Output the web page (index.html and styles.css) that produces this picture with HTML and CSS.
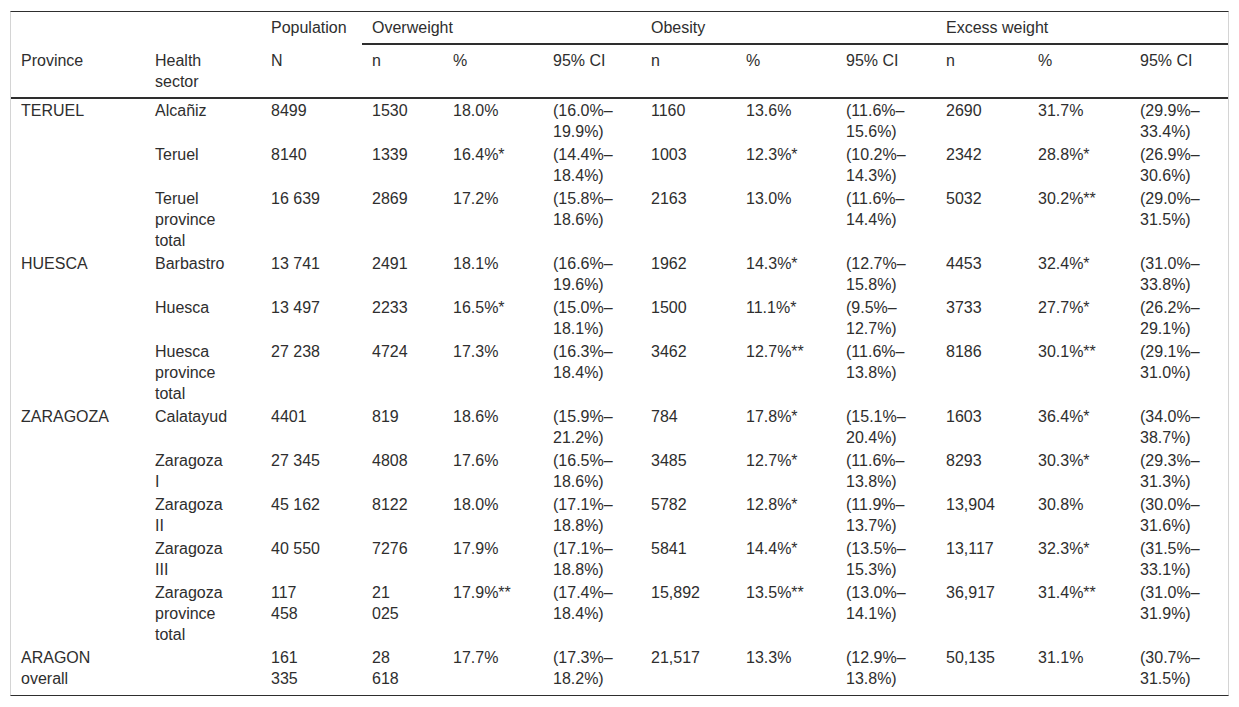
FILE: index.html
```html
<!DOCTYPE html>
<html lang="en">
<head>
<meta charset="utf-8">
<title>Overweight and obesity by health sector</title>
<link rel="stylesheet" href="styles.css">
</head>
<body>
<div class="table-wrap">
<table class="data">
<colgroup>
<col class="c-prov"><col class="c-sector"><col class="c-pop">
<col class="c-ow-n"><col class="c-ow-p"><col class="c-ow-ci">
<col class="c-ob-n"><col class="c-ob-p"><col class="c-ob-ci">
<col class="c-ex-n"><col class="c-ex-p"><col class="c-ex-ci">
</colgroup>
<thead>
<tr class="head-top">
<th></th><th></th><th>Population</th>
<th colspan="3" class="group">Overweight</th>
<th colspan="3" class="group">Obesity</th>
<th colspan="3" class="group">Excess weight</th>
</tr>
<tr class="head-sub">
<th>Province</th><th>Health<br>sector</th><th>N</th>
<th>n</th><th>%</th><th>95% CI</th>
<th>n</th><th>%</th><th>95% CI</th>
<th>n</th><th>%</th><th>95% CI</th>
</tr>
</thead>
<tbody>
<tr><td>TERUEL</td><td>Alcañiz</td><td>8499</td><td>1530</td><td>18.0%</td><td>(16.0%–<br>19.9%)</td><td>1160</td><td>13.6%</td><td>(11.6%–<br>15.6%)</td><td>2690</td><td>31.7%</td><td>(29.9%–<br>33.4%)</td></tr>
<tr><td></td><td>Teruel</td><td>8140</td><td>1339</td><td>16.4%*</td><td>(14.4%–<br>18.4%)</td><td>1003</td><td>12.3%*</td><td>(10.2%–<br>14.3%)</td><td>2342</td><td>28.8%*</td><td>(26.9%–<br>30.6%)</td></tr>
<tr><td></td><td>Teruel<br>province<br>total</td><td>16 639</td><td>2869</td><td>17.2%</td><td>(15.8%–<br>18.6%)</td><td>2163</td><td>13.0%</td><td>(11.6%–<br>14.4%)</td><td>5032</td><td>30.2%**</td><td>(29.0%–<br>31.5%)</td></tr>
<tr><td>HUESCA</td><td>Barbastro</td><td>13 741</td><td>2491</td><td>18.1%</td><td>(16.6%–<br>19.6%)</td><td>1962</td><td>14.3%*</td><td>(12.7%–<br>15.8%)</td><td>4453</td><td>32.4%*</td><td>(31.0%–<br>33.8%)</td></tr>
<tr><td></td><td>Huesca</td><td>13 497</td><td>2233</td><td>16.5%*</td><td>(15.0%–<br>18.1%)</td><td>1500</td><td>11.1%*</td><td>(9.5%–<br>12.7%)</td><td>3733</td><td>27.7%*</td><td>(26.2%–<br>29.1%)</td></tr>
<tr><td></td><td>Huesca<br>province<br>total</td><td>27 238</td><td>4724</td><td>17.3%</td><td>(16.3%–<br>18.4%)</td><td>3462</td><td>12.7%**</td><td>(11.6%–<br>13.8%)</td><td>8186</td><td>30.1%**</td><td>(29.1%–<br>31.0%)</td></tr>
<tr><td>ZARAGOZA</td><td>Calatayud</td><td>4401</td><td>819</td><td>18.6%</td><td>(15.9%–<br>21.2%)</td><td>784</td><td>17.8%*</td><td>(15.1%–<br>20.4%)</td><td>1603</td><td>36.4%*</td><td>(34.0%–<br>38.7%)</td></tr>
<tr><td></td><td>Zaragoza<br>I</td><td>27 345</td><td>4808</td><td>17.6%</td><td>(16.5%–<br>18.6%)</td><td>3485</td><td>12.7%*</td><td>(11.6%–<br>13.8%)</td><td>8293</td><td>30.3%*</td><td>(29.3%–<br>31.3%)</td></tr>
<tr><td></td><td>Zaragoza<br>II</td><td>45 162</td><td>8122</td><td>18.0%</td><td>(17.1%–<br>18.8%)</td><td>5782</td><td>12.8%*</td><td>(11.9%–<br>13.7%)</td><td>13,904</td><td>30.8%</td><td>(30.0%–<br>31.6%)</td></tr>
<tr><td></td><td>Zaragoza<br>III</td><td>40 550</td><td>7276</td><td>17.9%</td><td>(17.1%–<br>18.8%)</td><td>5841</td><td>14.4%*</td><td>(13.5%–<br>15.3%)</td><td>13,117</td><td>32.3%*</td><td>(31.5%–<br>33.1%)</td></tr>
<tr><td></td><td>Zaragoza<br>province<br>total</td><td>117<br>458</td><td>21<br>025</td><td>17.9%**</td><td>(17.4%–<br>18.4%)</td><td>15,892</td><td>13.5%**</td><td>(13.0%–<br>14.1%)</td><td>36,917</td><td>31.4%**</td><td>(31.0%–<br>31.9%)</td></tr>
<tr class="last"><td>ARAGON<br>overall</td><td></td><td>161<br>335</td><td>28<br>618</td><td>17.7%</td><td>(17.3%–<br>18.2%)</td><td>21,517</td><td>13.3%</td><td>(12.9%–<br>13.8%)</td><td>50,135</td><td>31.1%</td><td>(30.7%–<br>31.5%)</td></tr>
</tbody>
</table>
</div>
</body>
</html>
```

FILE: styles.css
```css
html, body {
  margin: 0;
  padding: 0;
  background: #ffffff;
}

body {
  font-family: "Liberation Sans", Arial, sans-serif;
  font-size: 16px;
  line-height: 21px;
  color: #2e2e2e;
}

.table-wrap {
  margin: 11px 0 0 10px;
  width: 1217px;
  border-top: 1px solid #2e2e2e;
  border-bottom: 1px solid #2e2e2e;
  border-left: 1px solid #d4d4d4;
  border-right: 1px solid #d4d4d4;
}

.data {
  width: 1217px;
  table-layout: fixed;
  border-collapse: separate;
  border-spacing: 0;
}

.c-prov { width: 134px; }
.c-sector { width: 116px; }
.c-pop { width: 101px; }
.c-ow-n { width: 81px; }
.c-ow-p { width: 100px; }
.c-ow-ci { width: 98px; }
.c-ob-n { width: 95px; }
.c-ob-p { width: 100px; }
.c-ob-ci { width: 100px; }
.c-ex-n { width: 92px; }
.c-ex-p { width: 102px; }
.c-ex-ci { width: 98px; }

.data th,
.data td {
  text-align: left;
  vertical-align: top;
  font-weight: normal;
  white-space: nowrap;
}

.data th {
  padding: 5px 10px;
}

.head-top .group {
  border-bottom: 2px solid #2e2e2e;
}

.head-sub th {
  border-bottom: 2px solid #2e2e2e;
}

.data td {
  padding: 1px 10px;
}

.data tr.last td {
  padding-bottom: 6px;
}
```
